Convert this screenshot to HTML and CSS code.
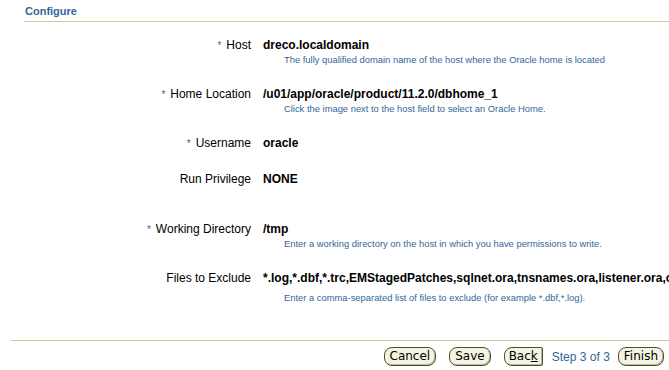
FILE: index.html
```html
<!DOCTYPE html>
<html lang="en">
<head>
<meta charset="UTF-8" />
<title>Configure</title>
<link rel="stylesheet" href="styles.css">
</head>
<body>
<!-- Section header -->
<div class="header">
  <h1>Configure</h1>
</div>

<!-- Fields -->
<div class="form">
  <div class="field">
    <div class="label"><span class="req">*</span>Host</div>
    <div class="value">
      <div class="text">dreco.localdomain</div>
      <div class="help">The fully qualified domain name of the host where the Oracle home is located</div>
    </div>
  </div>
  <div class="field">
    <div class="label"><span class="req">*</span>Home Location</div>
    <div class="value">
      <div class="text">/u01/app/oracle/product/11.2.0/dbhome_1</div>
      <div class="help">Click the image next to the host field to select an Oracle Home.</div>
    </div>
  </div>
  <div class="field">
    <div class="label"><span class="req">*</span>Username</div>
    <div class="value">
      <div class="text">oracle</div>
    </div>
  </div>
  <div class="field tall">
    <div class="label">Run Privilege</div>
    <div class="value">
      <div class="text">NONE</div>
    </div>
  </div>
  <div class="field">
    <div class="label"><span class="req">*</span>Working Directory</div>
    <div class="value">
      <div class="text">/tmp</div>
      <div class="help">Enter a working directory on the host in which you have permissions to write.</div>
    </div>
  </div>
  <div class="field">
    <div class="label">Files to Exclude</div>
    <div class="value">
      <div class="text">*.log,*.dbf,*.trc,EMStagedPatches,sqlnet.ora,tnsnames.ora,listener.ora,oratab</div>
      <div class="help spaced">Enter a comma-separated list of files to exclude (for example *.dbf,*.log).</div>
    </div>
  </div>
</div>

<!-- Train buttons -->
<div class="footer">
  <button class="btn">Cancel</button>
  <button class="btn">Save</button>
  <button class="btn back">Bac<u>k</u></button>
  <span class="step">Step 3 of 3</span>
  <button class="btn">Finish</button>
</div>
</body>
</html>
```

FILE: styles.css
```css
html, body {
  margin: 0;
  padding: 0;
  background: #fff;
  font-family: "Liberation Sans", Arial, sans-serif;
  overflow: hidden;
}

.header {
  margin-left: 24px;
  padding: 4px 0 3px 1px;
  border-bottom: 1px solid #cccc99;
}

.header h1 {
  margin: 0;
  font-size: 11px;
  line-height: 14px;
  font-weight: bold;
  color: #336699;
}

.form {
  margin-top: 15px;
}

.field {
  display: flex;
  margin-bottom: 19px;
}

.field.tall {
  margin-bottom: 34px;
}

.label {
  width: 251px;
  flex: none;
  text-align: right;
  font-size: 12px;
  line-height: 16px;
  color: #000;
}

.req {
  color: #336699;
  font-size: 10px;
  margin-right: 5px;
}

.value {
  margin-left: 12px;
  white-space: nowrap;
}

.text {
  font-size: 12px;
  line-height: 16px;
  font-weight: bold;
  color: #000;
}

.help {
  margin-left: 21px;
  font-size: 9.4px;
  line-height: 14px;
  color: #336699;
}

.help.spaced {
  margin-top: 5px;
}

.footer {
  margin: 35px 0 0 11px;
  border-top: 1px solid #cccc99;
  padding: 6px 5px 0 0;
  display: flex;
  justify-content: flex-end;
  align-items: center;
}

.btn {
  font-family: "DejaVu Sans", sans-serif;
  font-size: 12px;
  line-height: 15px;
  padding: 1px 5px;
  margin-left: 13px;
  color: #000;
  background: #f4f4e2;
  border: 1px solid #4d4d33;
  border-radius: 8px;
  box-shadow: inset -1px -1px 0 #b8b89a;
}

.btn.back {
  border-radius: 8px 2px 2px 8px;
  padding: 1px 4px;
}

.step {
  margin: 0 -5px 0 9px;
  font-size: 12px;
  color: #336699;
}
```
